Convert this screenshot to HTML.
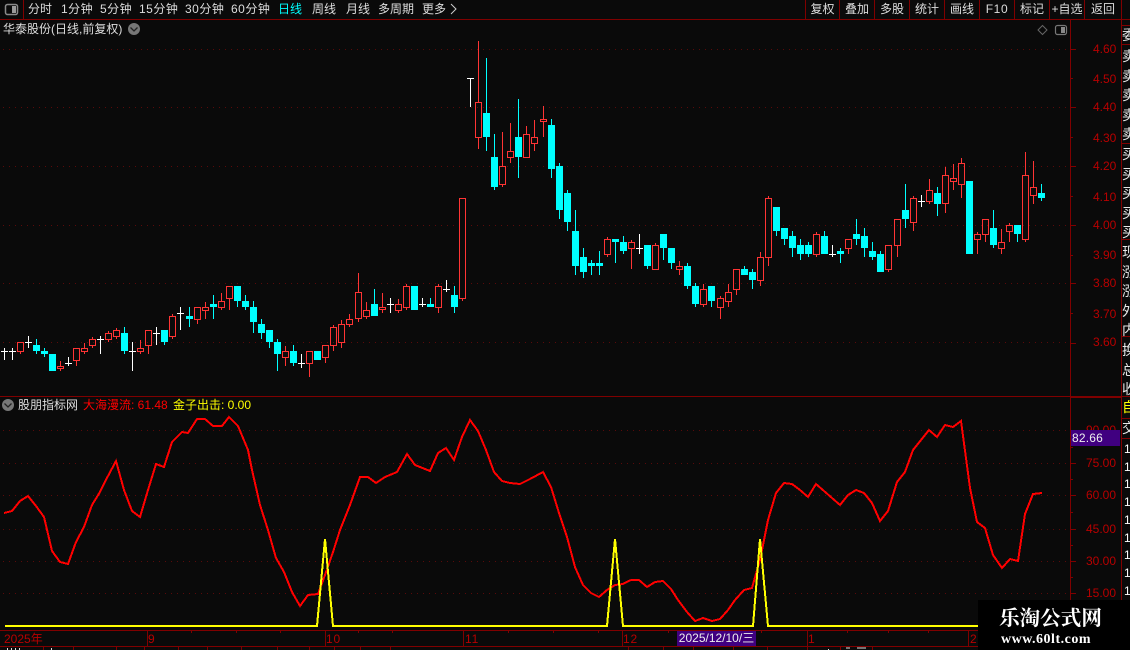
<!DOCTYPE html>
<html lang="zh"><head><meta charset="utf-8"><title>华泰股份</title>
<style>
html,body{margin:0;padding:0;background:#0a0a0a}
#p{position:relative;width:1130px;height:650px;overflow:hidden;background:#0a0a0a;font-family:"Liberation Sans","WenQuanYi Zen Hei","Noto Sans CJK SC",sans-serif;font-size:12px;color:#ddd}
svg{position:absolute;left:0;top:0}
.t{position:absolute;white-space:nowrap;line-height:14px}
.b{text-align:center;top:2px}
.a{color:#b80000;left:1093px}
.c{position:absolute;left:1122px;width:8px;overflow:hidden;font-size:14px;line-height:14px;color:#e8e8e8;white-space:nowrap}
</style></head><body><div id="p">
<svg width="1130" height="650" viewBox="0 0 1130 650" shape-rendering="crispEdges" fill="none">
<path d="M3 49.5H1070M3 107.5H1070M3 166.5H1070M3 225.5H1070M3 283.5H1070M3 342.5H1070M3 430.5H1070M3 463.5H1070M3 495.5H1070M3 529.5H1070M3 561.5H1070M3 593.5H1070" stroke="#5a0a0a" stroke-dasharray="1 5"/>
<path d="M0 19.5H1130M0 396.5H1130M0 630.5H1130M0 646.5H1130" stroke="#800000"/><path d="M1070 397.5H1121" stroke="#800000"/>
<path d="M23.5 0V19M805.5 0V19M839.5 0V19M874.5 0V19M909.5 0V19M944.5 0V19M979.5 0V19M1014.5 0V19M1049.5 0V19M1084.5 0V19M1121.5 0V650M1070.5 19V630M1122 25.5H1130M1122 44.5H1130M1122 143.5H1130M1122 239.5H1130M1122 336.5H1130M1122 418.5H1130M1122 438.5H1130" stroke="#800000"/>
<path d="M1070 49.5h6M1070 78.5h3M1070 107.5h6M1070 137.5h3M1070 166.5h6M1070 196.5h3M1070 225.5h6M1070 255.5h3M1070 283.5h6M1070 313.5h3M1070 343.5h6M1070 430.5h6M1070 447.5h3M1070 463.5h6M1070 479.5h3M1070 495.5h6M1070 512.5h3M1070 529.5h6M1070 545.5h3M1070 561.5h6M1070 577.5h3M1070 593.5h6" stroke="#800000"/>
<path d="M147.5 630V646M191.5 630V633M236.5 630V633M280.5 630V633M325.5 630V646M358.5 630V633M392.5 630V633M463.5 630V646M508.5 630V633M553.5 630V633M598.5 630V633M622.5 630V646M668.5 630V633M761.5 630V633M807.5 630V646M847.5 630V633M888.5 630V633M928.5 630V633M968.5 630V646M43.5 646V650M73.5 646V650M116.5 646V650M144.5 646V650M178.5 646V650M207.5 646V650M241.5 646V650M277.5 646V650M309.5 646V650M334.5 646V650M360.5 646V650M390.5 646V650M628.5 646V650M663.5 646V650M693.5 646V650M733.5 646V650M767.5 646V650M807.5 646V650M840.5 646V650M872.5 646V650" stroke="#800000"/>
<path d="M7.5 648V650M11.5 648V650M15.5 648V650M19.5 648V650M51.5 648V650M828.5 649V650M846 648h4M857 648h9" stroke="#ddd"/>

<!-- red candles -->
<path stroke="#ff3434" d="M17.5 342.5h6V351.5h-6zM20.5 352V354M57.5 366.5h6V368.5h-6zM60.5 361V366M60.5 369V371M73.5 348.5h6V360.5h-6zM76.5 361V366M81.5 348.5h6V351.5h-6zM84.5 343V348M84.5 352V354M89.5 339.5h6V345.5h-6zM92.5 337V339M92.5 346V348M105.5 333.5h6V339.5h-6zM108.5 331V333M108.5 340V342M113.5 330.5h6V336.5h-6zM116.5 328V330M116.5 337V339M137.5 348.5h6V351.5h-6zM140.5 340V348M140.5 352V354M145.5 330.5h6V345.5h-6zM148.5 346V354M169.5 316.5h6V336.5h-6zM172.5 314V316M172.5 337V339M194.5 307.5h6V319.5h-6zM197.5 320V324M202.5 307.5h6V310.5h-6zM205.5 302V307M205.5 311V319M218.5 301.5h6V307.5h-6zM221.5 293V301M221.5 308V310M226.5 286.5h6V298.5h-6zM229.5 299V310
M282.5 351.5h6V357.5h-6zM285.5 346V351M285.5 358V366M306.5 351.5h6V363.5h-6zM309.5 364V377M322.5 345.5h6V357.5h-6zM325.5 358V363M330.5 327.5h6V345.5h-6zM333.5 325V327M333.5 346V351M338.5 324.5h6V342.5h-6zM341.5 320V324M341.5 343V348M346.5 319.5h6V324.5h-6zM349.5 314V319M349.5 325V327M355.5 292.5h6V318.5h-6zM358.5 273V292M358.5 319V322M363.5 310.5h6V316.5h-6zM366.5 302V310M366.5 317V319M379.5 307.5h6V309.5h-6zM382.5 293V307M382.5 310V313M395.5 304.5h6V310.5h-6zM398.5 299V304M398.5 311V313M403.5 286.5h6V307.5h-6zM406.5 284V286M406.5 308V310M435.5 286.5h6V307.5h-6zM438.5 284V286M438.5 308V313
M459.5 198.5h6V298.5h-6zM462.5 299V301M475.5 102.5h6V137.5h-6zM478.5 41V102M478.5 138V149M499.5 166.5h6V184.5h-6zM502.5 132V166M502.5 185V187M507.5 151.5h6V157.5h-6zM510.5 123V151M510.5 158V163M523.5 134.5h6V157.5h-6zM526.5 126V134M531.5 137.5h6V143.5h-6zM534.5 120V137M534.5 144V151M540.5 119.5h6V121.5h-6zM543.5 106V119M543.5 122V137
M604.5 239.5h6V254.5h-6zM607.5 237V239M607.5 255V257M628.5 242.5h6V248.5h-6zM631.5 240V242M631.5 249V269M652.5 245.5h6V269.5h-6zM655.5 243V245M676.5 266.5h6V269.5h-6zM679.5 261V266M679.5 270V275M700.5 289.5h6V304.5h-6zM703.5 284V289M703.5 305V307M717.5 298.5h6V307.5h-6zM720.5 296V298M720.5 308V319M725.5 292.5h6V301.5h-6zM728.5 284V292M728.5 302V307M733.5 269.5h6V289.5h-6zM736.5 290V295M757.5 257.5h6V280.5h-6zM760.5 252V257M760.5 281V286M765.5 198.5h6V257.5h-6zM768.5 196V198M768.5 258V266M813.5 234.5h6V254.5h-6zM816.5 232V234M816.5 255V257M845.5 239.5h6V248.5h-6zM848.5 249V254
M885.5 245.5h6V269.5h-6zM888.5 270V272M894.5 219.5h6V245.5h-6zM897.5 246V257M910.5 198.5h6V222.5h-6zM913.5 196V198M913.5 223V231M926.5 190.5h6V201.5h-6zM929.5 179V190M929.5 202V204M942.5 175.5h6V203.5h-6zM945.5 167V175M945.5 204V213M950.5 178.5h6V181.5h-6zM953.5 164V178M953.5 182V190M958.5 163.5h6V184.5h-6zM961.5 158V163M961.5 185V198M974.5 234.5h6V239.5h-6zM977.5 232V234M977.5 240V254M982.5 219.5h6V234.5h-6zM985.5 235V242M998.5 242.5h6V248.5h-6zM1001.5 229V242M1001.5 249V254M1006.5 225.5h6V231.5h-6zM1009.5 223V225M1009.5 232V242M1022.5 175.5h6V239.5h-6zM1025.5 152V175M1025.5 240V242M1030.5 187.5h6V195.5h-6zM1033.5 161V187M1033.5 196V204"/>

<!-- cyan wicks -->
<path stroke="#00ffff" d="M36.5 339V354M44.5 348V357M124.5 327V354M164.5 330V345M189.5 307V327M213.5 295V319M237.5 286V307M245.5 295V310M253.5 301V333M261.5 319V339M269.5 330V348M277.5 339V371M293.5 345V366M374.5 289V316M430.5 298V307M454.5 286V313M486.5 58V151M494.5 134V190M518.5 99V178M551.5 119V178M559.5 163V219M567.5 190V231M575.5 210V275M583.5 248V278M591.5 260V275M599.5 251V275M615.5 239V263M623.5 236V254M647.5 245V269M663.5 234V260M671.5 248V269M687.5 263V289M695.5 283V307M711.5 286V307M744.5 266V275M752.5 269V289M776.5 207V236M784.5 228V245M792.5 231V257M800.5 239V260M808.5 242V257M824.5 231V254M840.5 248V263M856.5 219V245M864.5 228V257M872.5 242V260M880.5 251V272M905.5 184V228M937.5 187V216M993.5 210V248M1017.5 225V242M1041.5 184V201"/>
<!-- cyan bodies -->
<path fill="#00ffff" d="M33 345h7V351h-7zM41 351h7V354h-7zM49 354h7V371h-7zM121 333h7V351h-7zM161 330h7V342h-7zM186 316h7V319h-7zM210 304h7V307h-7zM234 286h7V301h-7zM242 301h7V307h-7zM250 307h7V322h-7zM258 324h7V333h-7zM266 330h7V342h-7zM274 342h7V354h-7zM290 351h7V363h-7zM314 351h7V360h-7zM371 304h7V316h-7zM411 286h7V310h-7zM427 304h7V307h-7zM451 295h7V307h-7zM483 113h7V137h-7zM491 157h7V187h-7zM515 137h7V157h-7zM548 125h7V169h-7zM556 166h7V210h-7zM564 193h7V222h-7zM572 231h7V266h-7zM580 257h7V272h-7zM588 263h7V266h-7zM596 263h7V266h-7zM612 239h7V242h-7zM620 242h7V251h-7zM644 245h7V266h-7zM660 234h7V248h-7zM668 248h7V263h-7zM684 266h7V286h-7zM692 286h7V304h-7zM708 286h7V301h-7zM741 269h7V275h-7zM749 272h7V280h-7zM773 207h7V231h-7zM781 228h7V239h-7zM789 236h7V248h-7zM797 245h7V254h-7zM805 245h7V254h-7zM821 236h7V254h-7zM837 251h7V254h-7zM853 234h7V239h-7zM861 236h7V248h-7zM869 251h7V257h-7zM877 254h7V272h-7zM902 210h7V219h-7zM934 193h7V204h-7zM966 181h7V254h-7zM990 228h7V245h-7zM1014 225h7V234h-7zM1038 193h7V198h-7z"/>
<!-- white dojis -->
<path stroke="#fff" d="M4.5 348V360M1 351.5h7M12.5 348V360M9 351.5h7M28.5 336V348M25 342.5h7M68.5 357V366M65 363.5h7M100.5 336V354M97 339.5h7M132.5 342V371M129 351.5h7M156.5 327V345M153 333.5h7M180.5 307V330M177 313.5h7M301.5 354V368M298 363.5h7M390.5 298V313M387 304.5h7M422.5 298V307M419 304.5h7M446.5 280V292M443 289.5h7M470.5 78V107M467 78.5h7M639.5 234V254M636 248.5h7M832.5 245V257M829 254.5h7M921.5 195V207M918 201.5h7"/>

<!-- indicator -->
<polyline stroke="#ff0000" stroke-width="2" points="4,513 12,511 20,501 28,496 36,506 44,517 52,551 60,562 68,564 76,542 84,527 92,505 100,492 108,476 116,461 124,490 132,511 140,517 148,490 156,464 164,467 172,442 182,432 188,433 197,419 205,419 213,426 222,426 229,417 238,426 248,450 252,470 260,505 268,530 276,558 284,572 292,592 300,606 308,595 318,594 325,575 333,552 340,530 350,505 360,477 368,477 376,483 385,477 397,472 407,454 415,465 430,471 438,453 446,448 454,460 462,437 470,420 478,431 486,450 494,472 502,481 510,483 520,484 530,479 543,472 551,487 559,513 567,537 575,567 583,585 591,593 599,597 607,590 615,585 623,584 631,580 639,580 647,587 655,582 663,581 671,589 678,600 687,612 695,621 703,618 712,621 720,619 728,610 735,600 744,590 752,588 760,560 768,520 776,493 784,483 792,484 800,490 808,497 816,484 824,491 832,498 840,505 848,495 856,490 864,493 872,503 880,521 888,511 897,482 905,472 913,450 921,440 929,430 937,437 945,425 953,427 961,421 970,488 977,522 985,528 993,555 1002,568 1010,559 1018,561 1025,514 1033,494 1042,493"/>
<polyline stroke="#ffff00" stroke-width="2" points="5,626 317,626 325,539 333,626 607,626 615,539 623,626 753,626 760,539 768,626 980,626"/>

<!-- icons -->
<rect x="5.5" y="4.5" width="12" height="10" rx="2" stroke="#8a8a8a" stroke-width="1.5" shape-rendering="auto"/><rect x="12" y="6" width="4" height="7" fill="#9a9a9a"/>
<rect x="1055.5" y="25.5" width="11" height="9" rx="2" stroke="#777" stroke-width="1.2" shape-rendering="auto"/><rect x="1061" y="27" width="4" height="6" fill="#888"/>
<path d="M1042.5 25.5l4.5 4.5-4.5 4.5-4.5-4.5z" stroke="#666" shape-rendering="auto"/>
<circle cx="134" cy="29" r="6" fill="#777" shape-rendering="auto"/><path d="M130.5 27.5l3.5 3.5 3.5-3.5" stroke="#222" stroke-width="1.3" shape-rendering="auto"/>
<circle cx="8" cy="405" r="6" fill="#777" shape-rendering="auto"/><path d="M4.5 403.5l3.5 3.5 3.5-3.5" stroke="#222" stroke-width="1.3" shape-rendering="auto"/>
<path d="M451 4l5 5-5 5" stroke="#ccc" shape-rendering="auto"/>
</svg>

<span class="t" style="left:28px;top:2px">分时</span>
<span class="t" style="left:61px;top:2px;letter-spacing:.5px">1分钟</span>
<span class="t" style="left:100px;top:2px;letter-spacing:.5px">5分钟</span>
<span class="t" style="left:139px;top:2px;letter-spacing:.5px">15分钟</span>
<span class="t" style="left:185px;top:2px;letter-spacing:.5px">30分钟</span>
<span class="t" style="left:231px;top:2px;letter-spacing:.5px">60分钟</span>
<span class="t" style="left:278px;top:2px;color:#0ff">日线</span>
<span class="t" style="left:312px;top:2px">周线</span>
<span class="t" style="left:346px;top:2px">月线</span>
<span class="t" style="left:378px;top:2px">多周期</span>
<span class="t" style="left:422px;top:2px">更多</span>
<span class="t b" style="left:806px;width:33px">复权</span>
<span class="t b" style="left:840px;width:34px">叠加</span>
<span class="t b" style="left:875px;width:34px">多股</span>
<span class="t b" style="left:910px;width:34px">统计</span>
<span class="t b" style="left:945px;width:34px">画线</span>
<span class="t b" style="left:980px;width:34px;letter-spacing:.6px">F10</span>
<span class="t b" style="left:1015px;width:34px">标记</span>
<span class="t b" style="left:1050px;width:34px">+自选</span>
<span class="t b" style="left:1085px;width:36px">返回</span>
<span class="t" style="left:3px;top:22px">华泰股份(日线,前复权)</span>

<span class="t a" style="top:42px">4.60</span><span class="t a" style="top:72px">4.50</span><span class="t a" style="top:100px">4.40</span><span class="t a" style="top:131px">4.30</span><span class="t a" style="top:159px">4.20</span><span class="t a" style="top:190px">4.10</span><span class="t a" style="top:218px">4.00</span><span class="t a" style="top:248px">3.90</span><span class="t a" style="top:276px">3.80</span><span class="t a" style="top:307px">3.70</span><span class="t a" style="top:335px">3.60</span>

<span class="c" style="top:28px">委</span>
<span class="c" style="top:47px;line-height:19.6px;white-space:normal">卖<br>卖<br>卖<br>卖<br>卖<br>买<br>买<br>买<br>买<br>买<br>现<br>涨<br>涨<br>外<br>内<br>换<br>总<br>收</span>

<span class="t" style="left:18px;top:398px">股朋指标网</span>
<span class="t" style="left:83px;top:398px;color:#f00">大海漫流: 61.48</span>
<span class="t" style="left:173px;top:398px;color:#ff0">金子出击: 0.00</span>

<span class="t a" style="top:423px;left:1086px">90.00</span><span class="t a" style="top:456px;left:1086px">75.00</span><span class="t a" style="top:488px;left:1086px">60.00</span><span class="t a" style="top:522px;left:1086px">45.00</span><span class="t a" style="top:554px;left:1086px">30.00</span><span class="t a" style="top:586px;left:1086px">15.00</span>
<span class="t" style="left:1071px;top:430px;width:49px;height:16px;line-height:16px;background:#400080;color:#eee;text-indent:1px;letter-spacing:.2px">82.66</span>

<span class="c" style="top:400px;color:#ff0">自</span>
<span class="c" style="top:421px">交</span>
<span class="c" style="top:441px;line-height:17.7px;white-space:normal;font-size:12px;color:#fff;left:1124px;width:6px">1<br>1<br>1<br>1<br>1<br>1<br>1<br>1<br>1</span>

<span class="t" style="left:4px;top:632px;color:#b80000">2025年</span>
<span class="t" style="left:148px;top:632px;color:#b80000">9</span>
<span class="t" style="left:326px;top:632px;color:#b80000;letter-spacing:.8px">10</span>
<span class="t" style="left:465px;top:632px;color:#b80000;letter-spacing:.8px">11</span>
<span class="t" style="left:623px;top:632px;color:#b80000;letter-spacing:.8px">12</span>
<span class="t" style="left:808px;top:632px;color:#b80000">1</span>
<span class="t" style="left:970px;top:632px;color:#b80000">2</span>
<span class="t" style="left:677px;top:631px;width:79px;height:15px;line-height:15px;background:#400080;color:#eee;text-align:center">2025/12/10/三</span>

<div style="position:absolute;left:978px;top:600px;width:152px;height:50px;background:#000"></div>
<span class="t" style="left:999px;top:608px;font-size:20.6px;line-height:22px;font-weight:bold;color:#fff;font-family:'Liberation Serif','Noto Serif CJK SC',serif">乐淘公式网</span>
<span class="t" style="left:1001px;top:633px;font-size:14px;letter-spacing:.5px;font-weight:bold;color:#fff;font-family:'Liberation Serif',serif">www.60lt.com</span>
</div></body></html>
